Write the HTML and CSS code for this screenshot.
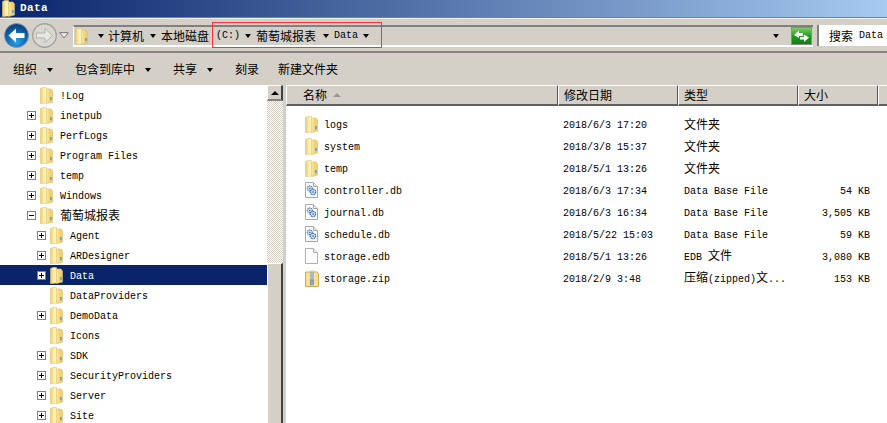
FILE: index.html
```html
<!DOCTYPE html>
<html lang="zh">
<head>
<meta charset="utf-8">
<title>Data</title>
<link rel="stylesheet" href="styles.css">
</head>
<body>
<svg class="defs" width="0" height="0">
  <defs>
    <linearGradient id="fg" x1="0" y1="0" x2="1" y2="0">
      <stop offset="0" stop-color="#ecca68"/><stop offset="0.55" stop-color="#fbeeb0"/><stop offset="1" stop-color="#fdf5c8"/>
    </linearGradient>
    <linearGradient id="fb" x1="0" y1="0" x2="1" y2="0">
      <stop offset="0" stop-color="#f3d87f"/><stop offset="1" stop-color="#f0cf70"/>
    </linearGradient>
    <radialGradient id="blue" cx="0.5" cy="0.75" r="0.75">
      <stop offset="0" stop-color="#2aa5e8"/><stop offset="0.55" stop-color="#0f66ad"/><stop offset="1" stop-color="#0a3a72"/>
    </radialGradient>
    <linearGradient id="grn" x1="0" y1="0" x2="0" y2="1">
      <stop offset="0" stop-color="#7fd06a"/><stop offset="0.5" stop-color="#1f9e1f"/><stop offset="1" stop-color="#0c7d12"/>
    </linearGradient>
    <symbol id="folder" viewBox="0 0 13 17">
      <path d="M0.5 1.5 L3 0.5 H6.5 V16 L2 16.5 H0.5 Z" fill="url(#fg)" stroke="#e3c670" stroke-width="0.6"/>
      <path d="M6.5 2 H11 L12.5 4 V15 L6.5 16.5 Z" fill="url(#fb)" stroke="#dcb95e" stroke-width="0.6"/>
      <path d="M6.5 1.5 L8.5 3 V15 L6.5 16.5 Z" fill="#f6e396"/>
      <rect x="10.2" y="10" width="1.4" height="3.2" fill="#3d9fd6"/>
    </symbol>
    <symbol id="dbfile" viewBox="0 0 13 16">
      <path d="M0.5 0.5 H8.5 L12.5 4.5 V15.5 H0.5 Z" fill="#fdfdfd" stroke="#a8a8a8"/>
      <path d="M8.5 0.5 V4.5 H12.5" fill="#e8e8e8" stroke="#a8a8a8"/>
      <circle cx="4.8" cy="6.4" r="2.5" fill="#cfe0f2" stroke="#3f76b5" stroke-width="1.1" stroke-dasharray="1.2 0.6"/>
      <circle cx="8" cy="10" r="2.7" fill="#cfe0f2" stroke="#2a62a6" stroke-width="1.1" stroke-dasharray="1.2 0.6"/>
      <circle cx="4.8" cy="6.4" r="0.7" fill="#2a62a6"/>
      <circle cx="8" cy="10" r="0.8" fill="#2a62a6"/>
    </symbol>
    <symbol id="plainfile" viewBox="0 0 13 16">
      <path d="M0.5 0.5 H8.5 L12.5 4.5 V15.5 H0.5 Z" fill="#fdfdfd" stroke="#b0b0b0"/>
      <path d="M8.5 0.5 V4.5 H12.5" fill="#ececec" stroke="#b0b0b0"/>
    </symbol>
    <symbol id="zipfile" viewBox="0 0 14 17">
      <path d="M0.5 2 H12 L13.5 4 V16.5 H0.5 Z" fill="#f8e290" stroke="#d0ab4c"/>
      <rect x="5.5" y="1" width="3" height="14" fill="#e6ebf1" stroke="#8ba0bb" stroke-width="0.5"/>
      <path d="M5.8 3 H8.2 M5.8 5 H8.2 M5.8 7 H8.2 M5.8 9 H8.2" stroke="#5a789e" stroke-width="0.9"/>
      <rect x="5.5" y="10" width="3" height="4.5" fill="#93a9c4" stroke="#5a789e" stroke-width="0.5"/>
    </symbol>
  </defs>
</svg>

<div class="window">
  <header class="titlebar">
    <svg class="ico-folder"><use href="#folder"/></svg>
    <span class="title-text">Data</span>
  </header>

  <nav class="navbar">
    <div class="navbtns">
      <svg class="navbtn" viewBox="0 0 25 25" width="25" height="25">
        <circle cx="12.5" cy="12.5" r="12" fill="url(#blue)" stroke="#7f96ad"/>
        <path d="M4.5 12.5 L12 5.5 V10 H20.5 V15 H12 V19.5 Z" fill="#fff"/>
      </svg>
      <svg class="navbtn" viewBox="0 0 25 25" width="25" height="25">
        <circle cx="12.5" cy="12.5" r="11.8" fill="#d9d7d2" stroke="#a3a19c" stroke-width="1.4"/>
        <path d="M20.5 12.5 L13 5.5 V10 H4.5 V15 H13 V19.5 Z" fill="#e8e7e3" stroke="#b3b1ac"/>
      </svg>
      <svg class="navdrop" viewBox="0 0 10 7" width="10" height="7"><path d="M0.7 0.7 H9.3 L5 6 Z" fill="#eeeeea" stroke="#77767a"/></svg>
    </div>
    <div class="address">
      <svg class="ico-folder"><use href="#folder"/></svg>
      <i class="arrow first"></i>
      <span class="cn">计算机</span>
      <i class="arrow after-pc"></i>
      <span class="cn">本地磁盘</span>
      <span class="drive">(C:)</span>
      <i class="arrow"></i>
      <span class="cn">葡萄城报表</span>
      <i class="arrow wide"></i>
      <span>Data</span>
      <i class="arrow"></i>
      <i class="arrow end"></i>
      <svg class="refresh" viewBox="0 0 21 18" width="21" height="18">
        <rect x="0.5" y="0.5" width="20" height="17" fill="url(#grn)" stroke="#8d8d85"/>
        <path d="M3 8 L8 3.5 V6 H12 V9 H8 V11 Z M18 10.5 L13 15 V12.5 H9 V10 H13 V7.5 Z" fill="#fff"/>
      </svg>
    </div>
    <div class="search"><span class="cn">搜索</span><span>Data</span></div>
    <div class="annotation"></div>
  </nav>

  <div class="toolbar">
    <span class="tool cn">组织<i class="arrow"></i></span>
    <span class="tool cn">包含到库中<i class="arrow"></i></span>
    <span class="tool cn">共享<i class="arrow"></i></span>
    <span class="tool cn">刻录</span>
    <span class="tool cn">新建文件夹</span>
  </div>

  <main class="main">
    <div class="tree">
      <div class="node l1"><span class="exp none"></span><svg class="ico-folder"><use href="#folder"/></svg><span class="lat">!Log</span></div>
      <div class="node l1"><span class="exp"></span><svg class="ico-folder"><use href="#folder"/></svg><span class="lat">inetpub</span></div>
      <div class="node l1"><span class="exp"></span><svg class="ico-folder"><use href="#folder"/></svg><span class="lat">PerfLogs</span></div>
      <div class="node l1"><span class="exp"></span><svg class="ico-folder"><use href="#folder"/></svg><span class="lat">Program Files</span></div>
      <div class="node l1"><span class="exp"></span><svg class="ico-folder"><use href="#folder"/></svg><span class="lat">temp</span></div>
      <div class="node l1"><span class="exp"></span><svg class="ico-folder"><use href="#folder"/></svg><span class="lat">Windows</span></div>
      <div class="node l1"><span class="exp open"></span><svg class="ico-folder"><use href="#folder"/></svg><span class="cn">葡萄城报表</span></div>
      <div class="node l2"><span class="exp"></span><svg class="ico-folder"><use href="#folder"/></svg><span class="lat">Agent</span></div>
      <div class="node l2"><span class="exp"></span><svg class="ico-folder"><use href="#folder"/></svg><span class="lat">ARDesigner</span></div>
      <div class="node l2 selected"><span class="exp"></span><svg class="ico-folder"><use href="#folder"/></svg><span class="lat">Data</span></div>
      <div class="node l2"><span class="exp none"></span><svg class="ico-folder"><use href="#folder"/></svg><span class="lat">DataProviders</span></div>
      <div class="node l2"><span class="exp"></span><svg class="ico-folder"><use href="#folder"/></svg><span class="lat">DemoData</span></div>
      <div class="node l2"><span class="exp none"></span><svg class="ico-folder"><use href="#folder"/></svg><span class="lat">Icons</span></div>
      <div class="node l2"><span class="exp"></span><svg class="ico-folder"><use href="#folder"/></svg><span class="lat">SDK</span></div>
      <div class="node l2"><span class="exp"></span><svg class="ico-folder"><use href="#folder"/></svg><span class="lat">SecurityProviders</span></div>
      <div class="node l2"><span class="exp"></span><svg class="ico-folder"><use href="#folder"/></svg><span class="lat">Server</span></div>
      <div class="node l2"><span class="exp"></span><svg class="ico-folder"><use href="#folder"/></svg><span class="lat">Site</span></div>
    </div>

    <div class="scrollbar">
      <div class="scroll-up"><i></i></div>
      <div class="scroll-track"></div>
      <div class="scroll-thumb"></div>
    </div>

    <section class="list">
      <div class="list-head">
        <div class="col cn">名称<i class="sort"></i></div>
        <div class="col cn">修改日期</div>
        <div class="col cn">类型</div>
        <div class="col cn">大小</div>
        <div class="col rest"></div>
      </div>
      <div class="rows">
        <div class="row"><div class="name"><svg class="ico-folder"><use href="#folder"/></svg><span class="lat">logs</span></div><div class="lat">2018/6/3 17:20</div><div class="cn">文件夹</div><div class="size"></div></div>
        <div class="row"><div class="name"><svg class="ico-folder"><use href="#folder"/></svg><span class="lat">system</span></div><div class="lat">2018/3/8 15:37</div><div class="cn">文件夹</div><div class="size"></div></div>
        <div class="row"><div class="name"><svg class="ico-folder"><use href="#folder"/></svg><span class="lat">temp</span></div><div class="lat">2018/5/1 13:26</div><div class="cn">文件夹</div><div class="size"></div></div>
        <div class="row"><div class="name"><svg class="ico-file"><use href="#dbfile"/></svg><span class="lat">controller.db</span></div><div class="lat">2018/6/3 17:34</div><div class="lat">Data Base File</div><div class="size lat">54 KB</div></div>
        <div class="row"><div class="name"><svg class="ico-file"><use href="#dbfile"/></svg><span class="lat">journal.db</span></div><div class="lat">2018/6/3 16:34</div><div class="lat">Data Base File</div><div class="size lat">3,505 KB</div></div>
        <div class="row"><div class="name"><svg class="ico-file"><use href="#dbfile"/></svg><span class="lat">schedule.db</span></div><div class="lat">2018/5/22 15:03</div><div class="lat">Data Base File</div><div class="size lat">59 KB</div></div>
        <div class="row"><div class="name"><svg class="ico-file"><use href="#plainfile"/></svg><span class="lat">storage.edb</span></div><div class="lat">2018/5/1 13:26</div><div>EDB <span class="cn">文件</span></div><div class="size lat">3,080 KB</div></div>
        <div class="row"><div class="name"><svg class="ico-zip"><use href="#zipfile"/></svg><span class="lat">storage.zip</span></div><div class="lat">2018/2/9 3:48</div><div><span class="cn">压缩</span>(zipped)<span class="cn">文</span>...</div><div class="size lat">153 KB</div></div>
      </div>
    </section>
  </main>
</div>
</body>
</html>
```

FILE: styles.css
```css
* { box-sizing: border-box; }
html, body { margin: 0; height: 100%; overflow: hidden; background: #fff; }
body { font: 10px/16px "Liberation Mono", "DejaVu Sans Mono", monospace; color: #000; }
.defs { position: absolute; }
.cn { font-family: "Noto Sans CJK SC", "Liberation Sans", sans-serif; font-size: 12px; }
.lat { padding-top: 4px; }

.window { width: 887px; height: 423px; display: flex; flex-direction: column; overflow: hidden; }

.ico-folder { width: 13px; height: 17px; flex: none; display: block; }
.ico-file { width: 13px; height: 16px; flex: none; display: block; }
.ico-zip { width: 14px; height: 17px; flex: none; display: block; margin-right: -1px; }

/* title bar */
.titlebar {
  height: 18px; flex: none; display: flex; align-items: center; gap: 5px; padding: 0 0 1px 2px;
  background: linear-gradient(90deg, #0a246a, #a6caf0);
  border-bottom: 1px solid #808080;
  overflow: hidden;
}
.titlebar .title-text { color: #fff; font-weight: 700; font-size: 11px; letter-spacing: 0.4px; }

/* navigation band */
.navbar {
  height: 35px; flex: none; position: relative; display: flex; align-items: flex-start;
  background: #d4d0c8; border-top: 1px solid #f2f1ee; border-bottom: 2px solid #848484;
}
.navbtns { width: 73px; flex: none; display: flex; align-items: center; gap: 3px; padding: 4px 0 0 4px; }
.navbtn { display: block; flex: none; }
.navdrop { margin-left: -1px; flex: none; }
.address {
  width: 740px; height: 22px; margin-top: 6px; flex: none; display: flex; align-items: center;
  border-top: 2px solid #808080; border-bottom: 2px solid #fff; border-left: 1px solid #fff;
  padding-left: 1px; white-space: nowrap;
}
.arrow {
  flex: none; display: inline-block; width: 0; height: 0; margin: 0 5px;
  border-style: solid; border-width: 4px 3.5px 0; border-color: #000 transparent transparent;
}
.address .first { margin: 0 4px 0 10px; }
.address .after-pc { margin: 0 5px 0 6px; }
.address .wide { margin: 0 5px 0 7px; }
.address .end { margin: 0 12px 0 399px; }
.drive { margin-left: 7px; }
.refresh { flex: none; display: block; }
.search {
  width: 70px; height: 21px; margin: 6px 0 0 4px; flex: none; display: flex; align-items: center; gap: 6px;
  padding-left: 10px; background: #fff; border-left: 2px solid #808080; white-space: nowrap; overflow: hidden;
}
.annotation { position: absolute; left: 212px; top: 3px; width: 170px; height: 26px; border: 1px solid #f33; }

/* toolbar */
.toolbar { height: 32px; flex: none; display: flex; align-items: center; padding: 0 0 0 13px; gap: 22px; background: #d4d0c8; }
.tool { display: flex; align-items: center; }
.tool .arrow { margin: 1px 0 0 10px; }
.tool:last-child { margin-left: -3px; }

/* main */
.main { flex: 1; min-height: 0; display: flex; }

.tree { width: 267px; flex: none; }
.node { height: 20px; display: flex; align-items: center; white-space: nowrap; }
.node.l1 { padding-left: 27px; }
.node.l2 { padding-left: 37px; }
.node .ico-folder { margin: 0 7px 0 5px; }
.node.selected { background: #0a246a; color: #fff; }
.exp {
  width: 9px; height: 9px; flex: none; margin-right: -1px; position: relative;
  border: 1px solid #808080; background: #fff;
}
.exp.none { visibility: hidden; }
.exp::before { content: ""; position: absolute; left: 1px; top: 3px; width: 5px; height: 1px; background: #000; }
.exp::after { content: ""; position: absolute; left: 3px; top: 1px; width: 1px; height: 5px; background: #000; }
.exp.open::after { display: none; }

.scrollbar { width: 19px; flex: none; display: flex; flex-direction: column; background: #d4d0c8; }
.scroll-up {
  width: 16px; height: 16px; flex: none; background: #d4d0c8; display: flex; align-items: center; justify-content: center;
  border-top: 1px solid #fff; border-left: 1px solid #fff; border-right: 2px solid #404040; border-bottom: 2px solid #808080;
}
.scroll-up i { width: 0; height: 0; border-style: solid; border-width: 0 4px 4px; border-color: transparent transparent #000; }
.scroll-track {
  width: 16px; height: 162px; flex: none;
  background: conic-gradient(#fff 25%, #d4d0c8 0 50%, #fff 0 75%, #d4d0c8 0) 0 0 / 2px 2px;
}
.scroll-thumb { width: 16px; flex: 1; background: #d4d0c8; border-top: 1px solid #fff; border-left: 1px solid #fff; border-right: 2px solid #404040; }

.list { flex: 1; min-width: 0; }
.list-head { height: 21px; display: grid; grid-template-columns: 272px 120px 120px 80px 1fr; background: #d4d0c8; }
.col {
  display: flex; align-items: center; padding-left: 5px; white-space: nowrap;
  border-top: 1px solid #fff; border-left: 1px solid #fff; border-right: 1px solid #555; border-bottom: 2px solid #606060;
}
.col:first-child { padding-left: 16px; }
.col.rest { border-right: 0; }
.sort { width: 0; height: 0; margin: 0 0 0 6px; border-style: solid; border-width: 0 4px 4px; border-color: transparent transparent #999; }

.rows { padding-top: 7px; }
.row { height: 22px; display: grid; grid-template-columns: 272px 120px 120px 80px; align-items: center; white-space: nowrap; }
.row > div:nth-child(2) { padding-left: 5px; }
.row > div:nth-child(3) { padding-left: 6px; }
.name { display: flex; align-items: center; padding-left: 19px; gap: 6px; }
.size { text-align: right; padding-right: 8px; }
```
